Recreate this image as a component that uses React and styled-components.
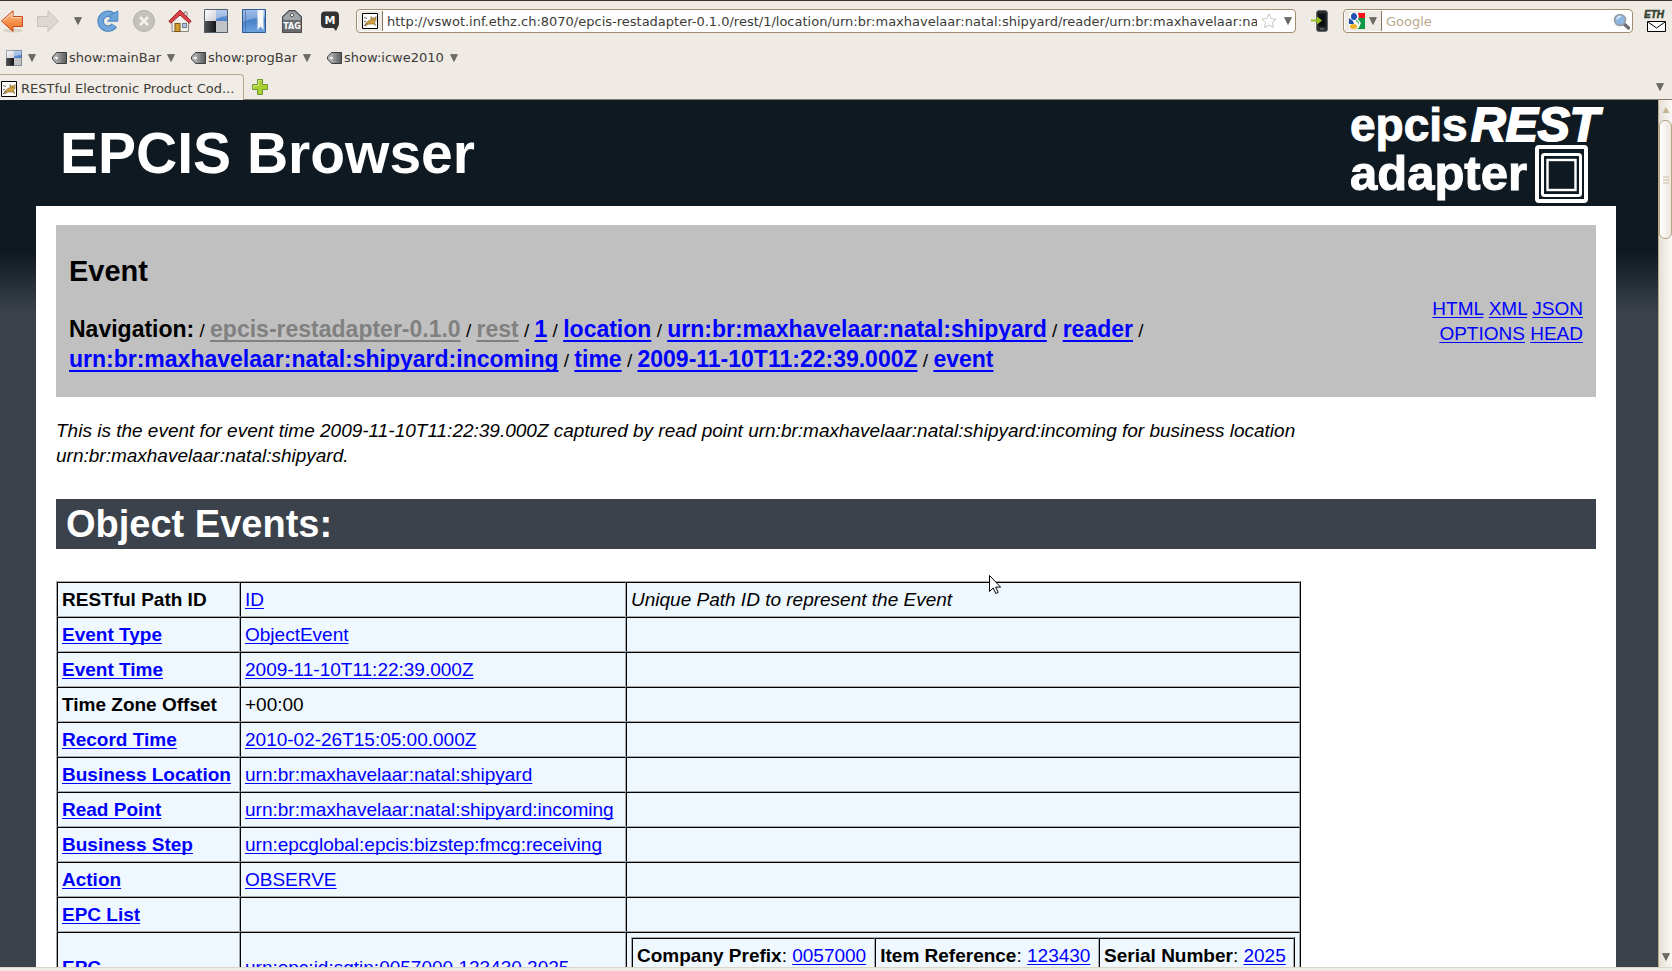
import React from "react";
import styled, { createGlobalStyle, css } from "styled-components";

const GlobalStyle = createGlobalStyle`
  *, *::before, *::after { box-sizing: border-box; }
  body { margin: 0; background: #efeae3; font-family: "Liberation Sans", Arial, sans-serif; }
`;

const Window = styled.div`
  display: flex;
  flex-direction: column;
  height: 100vh;
  overflow: hidden;
`;

/* ---------- browser chrome ---------- */

const Chrome = styled.header`
  flex: none;
  border-top: 1px solid #3c3633;
  background: #efeae3;
  color: #3c3b37;
  font: 13px/16px "DejaVu Sans", Verdana, sans-serif;
`;

const Toolbar = styled.div`
  display: flex;
  align-items: center;
  height: 40px;
  padding-right: 6px;
`;

const ToolGroup = styled.div`
  display: flex;
  align-items: center;
  gap: 12px;
  padding-right: 12px;
`;

const IconButton = styled.button`
  display: flex;
  align-items: center;
  justify-content: ${(p) => p.$align || "center"};
  flex: none;
  width: ${(p) => p.$w || 24}px;
  height: ${(p) => p.$h || 24}px;
  padding: 0;
  border: 0;
  background: none;
`;

const Field = styled.div`
  display: flex;
  align-items: center;
  flex: ${(p) => p.$flex || "none"};
  width: ${(p) => (p.$w ? p.$w + "px" : "auto")};
  height: 24px;
  border: 1px solid #a08d6f;
  border-radius: 4px;
  background: #fff;
  overflow: hidden;
`;

const FieldAddon = styled.div`
  display: flex;
  align-items: center;
  gap: 4px;
  height: 20px;
  padding: 0 4px;
  margin-left: 1px;
  border-right: 1px solid #85755c;
  background: #efeae3;
`;

const FieldInput = styled.input`
  flex: 1;
  min-width: 0;
  height: 22px;
  padding: 0;
  margin-left: 4px;
  border: 0;
  outline: 0;
  background: transparent;
  color: #3c3b37;
  font: inherit;
  &::placeholder { color: #b9a88b; opacity: 1; }
`;

const BookmarkBar = styled.nav`
  display: flex;
  align-items: center;
  gap: 16px;
  height: 33px;
  padding-left: 6px;
`;

const Bookmark = styled.button`
  display: flex;
  align-items: center;
  gap: 2px;
  padding: 0;
  border: 0;
  background: none;
  color: inherit;
  font: inherit;
  & > svg:last-child { margin-left: 4px; }
`;

const TabStrip = styled.div`
  display: flex;
  align-items: stretch;
  height: 26px;
`;

const Tab = styled.button`
  display: flex;
  align-items: center;
  gap: 4px;
  width: 244px;
  padding: 2px 0 0 1px;
  border: solid #b5a88f;
  border-width: 1px 1px 0 0;
  border-radius: 0 4px 0 0;
  background: #f1ede6;
  color: inherit;
  font: inherit;
`;

const TabRest = styled.div`
  display: flex;
  flex: 1;
  align-items: center;
  justify-content: space-between;
  padding: 0 7px 0 6px;
  border-bottom: 1px solid #85796a;
`;

/* ---------- page ---------- */

const Viewport = styled.div`
  position: relative;
  display: flex;
  flex: 1;
  min-height: 0;
`;

const Page = styled.div`
  flex: 1;
  min-width: 0;
  overflow: hidden;
  padding: 0 42px 0 36px;
  background: linear-gradient(#0f1922 0, #0f1922 152px, #3b424c 214px);
  font-size: 19px;
  line-height: 25px;
`;

const Banner = styled.div`
  display: flex;
  justify-content: space-between;
  align-items: center;
  height: 106px;
  padding: 0 9px 0 24px;
`;

const Title = styled.h1`
  margin: 0;
  color: #fff;
  font-size: 57px;
  line-height: 64px;
`;

const Sheet = styled.main`
  padding: 19px 20px 0;
  background: #fff;
  color: #000;
`;

const NavPanel = styled.section`
  display: flex;
  justify-content: space-between;
  min-height: 172px;
  padding: 0 13px;
  background: #c0c0c0;
`;

const PanelTitle = styled.h2`
  margin: 30px 0 28px;
  font-size: 29px;
  line-height: 32px;
`;

const Crumbs = styled.nav`
  font-size: 19px;
  line-height: 29px;
  & > b, & > a { font-size: 23px; }
`;

const Link = styled.a`
  color: #00f;
  text-decoration: underline 1px;
  text-underline-offset: 2px;
  text-decoration-skip-ink: none;
  ${(p) => p.$crumb && css`
    font-weight: bold;
    text-decoration-thickness: 2px;
    text-underline-offset: 3px;
  `}
  ${(p) => p.$muted && css`color: #808080;`}
`;

const Formats = styled.div`
  flex: none;
  width: 170px;
  padding-top: 71px;
  text-align: right;
`;

const Intro = styled.p`
  margin: 21px 0 31px;
  padding-right: 80px;
  font-style: italic;
`;

const SectionTitle = styled.h2`
  margin: 0 0 32px;
  padding-left: 10px;
  background: #3b424b;
  color: #fff;
  font-size: 38px;
  line-height: 50px;
`;

const Grid = styled.table`
  border: 1px solid;
  border-color: #a9a9a9 #000 #000 #a9a9a9;
  border-spacing: 0;
  background: #eff7ff;
  ${(p) => p.$nested && css`width: 100%; margin-bottom: 24px;`}
`;

const cell = css`
  padding: 4px;
  border: 1px solid;
  border-color: #000 #a9a9a9 #a9a9a9 #000;
  text-align: left;
  white-space: nowrap;
  height: 35px;
`;
const HeadCell = styled.th`${cell}`;
const Cell = styled.td`${cell} font-style: ${(p) => (p.$note ? "italic" : "normal")};`;
const Col = styled.col`width: ${(p) => p.$w}px;`;

const ScrollBar = styled.div`
  display: flex;
  flex-direction: column;
  flex: none;
  width: 14px;
  border-left: 1px solid #b9a888;
  background: linear-gradient(90deg, #e6e0d5, #faf8f5);
`;
const ScrollButton = styled.button`
  display: flex;
  align-items: center;
  justify-content: center;
  height: 20px;
  padding: 0;
  border: 0;
  background: none;
`;
const Thumb = styled.div`
  display: flex;
  align-items: center;
  justify-content: center;
  height: 119px;
  border: 1px solid #b5a585;
  border-radius: 6px;
  background: linear-gradient(90deg, #fff, #ece6dc);
`;
const Spacer = styled.div`flex: 1;`;

const StatusEdge = styled.footer`
  flex: none;
  height: 4px;
  border-top: 1px solid #dcd5ca;
  background: #efeae3;
`;

const Pointer = styled.svg`
  position: absolute;
  left: 988px;
  top: 474px;
`;

/* ---------- icons ---------- */

const Caret = ({ up, c = "#6b6a65" }) => (
  <svg width="8" height="8" viewBox="0 0 8 8">
    <path d={up ? "M4 1 7.500 7H.5z" : "M.5 .5h7L4 7.500z"} fill={c} stroke="#55534e" strokeWidth={up ? 0 : 0.6} />
  </svg>
);

const Back = () => (
  <svg width="24" height="24" viewBox="0 0 24 24">
    <defs><linearGradient id="bk" x2="0" y2="1"><stop stopColor="#fbc089" /><stop offset="1" stopColor="#ee6a1c" /></linearGradient></defs>
    <ellipse cx="13" cy="21.500" rx="10" ry="2" fill="#dcd3c8" />
    <path d="M1.500 12 13 1.800V7.500h9.500v10H13V22.500z" fill="url(#bk)" stroke="#c9461a" strokeLinejoin="round" />
    <path d="M3.200 12 12 4.200V8.600h9.400" fill="none" stroke="#fddcb9" />
  </svg>
);
const Forward = () => (
  <svg width="24" height="24" viewBox="0 0 24 24">
    <path d="M22.500 12 12 1.800V7.500H1.500v10H12V22.500z" fill="#dcd8d1" stroke="#c7c2ba" strokeLinejoin="round" />
  </svg>
);
const Reload = () => (
  <svg width="24" height="24" viewBox="0 0 24 24">
    <path d="M18.300 16.200A7.400 7.400 0 1 1 16.600 6.400" fill="none" stroke="#3f78b5" strokeWidth="6.400" />
    <path d="M18.300 16.200A7.400 7.400 0 1 1 16.600 6.400" fill="none" stroke="#6ea6dc" strokeWidth="4.800" />
    <path d="M21.800 2v10.200H11.600l3.600-3.600-2.200-2.300 4.500-2z" fill="#6ea6dc" stroke="#4a86c4" />
  </svg>
);
const Stop = () => (
  <svg width="24" height="24" viewBox="0 0 24 24">
    <circle cx="12" cy="12" r="10.500" fill="#c5c1bb" stroke="#b5b1ab" />
    <path d="M8 8l8 8M16 8l-8 8" stroke="#f4f1ed" strokeWidth="2.600" />
  </svg>
);
const Home = () => (
  <svg width="24" height="24" viewBox="0 0 24 24">
    <path d="M4 11.500v11h16.500v-11L12 4z" fill="#f1efec" stroke="#8b8782" />
    <path d="M16 3h3v5h-3z" fill="#e9e7e4" stroke="#8b8782" />
    <path d="M12 1 .8 12.200l2 1.900L12 6l9.200 8.100 2-1.900z" fill="#d8444a" stroke="#a5232a" />
    <rect x="7" y="14.500" width="5" height="8" fill="#d39a2c" stroke="#7d5610" />
    <rect x="14.500" y="14.500" width="4" height="4" fill="#a9c4e2" stroke="#6f7d8c" />
  </svg>
);
const Delicious = ({ size = 24 }) => (
  <svg width={size} height={size} viewBox="0 0 24 24">
    <defs>
      <linearGradient id="dl1" x2="1" y2="1"><stop stopColor="#fff" /><stop offset="1" stopColor="#d0d0d3" /></linearGradient>
      <linearGradient id="dl2" x2="0" y2="1"><stop stopColor="#8bb0e0" /><stop offset="1" stopColor="#4a7fcb" /></linearGradient>
      <linearGradient id="dl3" x2="1"><stop stopColor="#55575b" /><stop offset="1" stopColor="#131416" /></linearGradient>
    </defs>
    <path d="M0 0h12v12H0z" fill="url(#dl1)" /><path d="M12 0h12v12H12z" fill="url(#dl2)" />
    <path d="M0 12h12v12H0z" fill="url(#dl3)" /><path d="M12 12h12v12H12z" fill="#c1c3c7" />
    <path d="M12 0h12v7c-5 0-8 1-12 3z" fill="#fff" opacity=".4" />
    <path d="M.5 .5h23v23H.5z" fill="none" stroke="#55606f" />
  </svg>
);
const Book = () => (
  <svg width="24" height="24" viewBox="0 0 24 24">
    <defs><linearGradient id="bm" x2="0" y2="1"><stop stopColor="#7ba6df" /><stop offset=".5" stopColor="#4b82c9" /><stop offset="1" stopColor="#6fa3e0" /></linearGradient></defs>
    <path d="M.5 .5h23v23H.5z" fill="url(#bm)" stroke="#2f5a94" />
    <path d="M1 1h22v7C14 8 8 10 1 13z" fill="#fff" opacity=".25" />
    <path d="M3.500 1v22" stroke="#2f5a94" opacity=".5" />
    <path d="M15.500 1h6v20l-3-3.500-3 3.500z" fill="#f5f7fa" />
  </svg>
);
const TagIcon = () => (
  <svg width="22" height="24" viewBox="0 0 22 24">
    <path d="M1.500 7.500 8 1.500h6l6.500 6v16h-19z" fill="#676b6e" stroke="#484c4f" />
    <path d="M2.500 8 8.500 2.500h5l6 5.500v3h-17z" fill="#a1a4a6" />
    <circle cx="11" cy="6" r="1.700" fill="#f5f5f5" stroke="#55585a" />
    <text x="11" y="20" textAnchor="middle" fontFamily="DejaVu Sans" fontWeight="bold" fontSize="8" fill="#fff">TAG</text>
  </svg>
);
const MIcon = () => (
  <svg width="20" height="22" viewBox="0 0 20 22">
    <path d="M5 1.500h10a4 4 0 0 1 4 4v9l-3 6.500-2.500-3H5a4 4 0 0 1-4-4v-8.500a4 4 0 0 1 4-4z" fill="#333334" />
    <text x="10" y="14" textAnchor="middle" fontFamily="DejaVu Sans" fontWeight="bold" fontSize="11" fill="#fff">M</text>
  </svg>
);
const Cat = () => (
  <svg width="16" height="16" viewBox="0 0 16 16">
    <path d="M.5 .5h15v15H.5z" fill="#fff" stroke="#000" />
    <path d="M9 3.500l1.500 1.500h2L14 3.500v4L12.500 9l1 3.500-2-1.500H7l-4 2 1-3 3-2.500 2-1z" fill="#d2a041" stroke="#6e5a35" strokeWidth=".6" />
    <path d="M2 4.500l3 1M2 9l2-1M2 13l3-3M11 6.500h.8" stroke="#59564e" strokeWidth=".9" />
  </svg>
);
const Star = () => (
  <svg width="16" height="16" viewBox="0 0 16 16">
    <path d="M8 1l2.100 4.700 5 .5-3.800 3.400 1.100 5L8 12l-4.400 2.600 1.100-5L.9 6.200l5-.5z" fill="#fff" stroke="#c8c4be" />
  </svg>
);
const Phone = () => (
  <svg width="20" height="24" viewBox="0 0 20 24">
    <rect x="6.500" y="1.500" width="11" height="21" rx="2.500" fill="#2b2c2e" stroke="#66686b" />
    <path d="M8.500 4.500h7v13h-7z" fill="#0d0e0f" /><path d="M10 20h4" stroke="#85888c" />
    <path d="M1 10.500h6V7.500l5 4-5 4v-3H1z" fill="#98c321" />
  </svg>
);
const GoogleIcon = () => (
  <svg width="16" height="16" viewBox="0 0 16 16">
    <path d="M0 0h16v16H0z" fill="#fff" /><path d="M9 0h7v5H8z" fill="#f5141c" />
    <path d="M8 5h8v11H8c3-3 2-6-1-8z" fill="#129748" />
    <path d="M0 5v6h5L4 8z" fill="#1f4fb4" />
    <ellipse cx="5" cy="3.500" rx="3" ry="3.500" fill="#1f4fb4" /><ellipse cx="4.500" cy="13.500" rx="3.700" ry="2.500" fill="#f2b32a" />
    <path d="M7 0c3 2 2 5 1 6l3 4-2 5" fill="none" stroke="#fff" strokeWidth="1.500" />
  </svg>
);
const Magnifier = () => (
  <svg width="17" height="17" viewBox="0 0 17 17">
    <path d="M10 10l5.500 5" stroke="#6d6f72" strokeWidth="3.400" strokeLinecap="round" />
    <circle cx="7" cy="7" r="5.500" fill="#8fb7e4" stroke="#9a9da1" strokeWidth="1.600" />
    <path d="M4 6.500a3.500 3.500 0 0 1 4-3" stroke="#e6f0fb" fill="none" strokeWidth="1.500" />
  </svg>
);
const EthMail = () => (
  <svg width="22" height="24" viewBox="0 0 22 24">
    <text x="0" y="9" fontFamily="Liberation Sans" fontStyle="italic" fontWeight="bold" fontSize="10" fill="#35452f" stroke="#35452f" strokeWidth=".5">ETH</text>
    <path d="M3.500 12.500h18v10h-18z" fill="#fff" stroke="#000" />
    <path d="M4 13l8.500 6 8.500-6" fill="none" stroke="#000" />
  </svg>
);
const SmallTag = () => (
  <svg width="15" height="12" viewBox="0 0 15 12">
    <defs><linearGradient id="st" x2="1"><stop stopColor="#c9c9c9" /><stop offset="1" stopColor="#56585a" /></linearGradient></defs>
    <path d="M4.500 .5h10v11h-10L.5 7V5z" fill="url(#st)" stroke="#3d3e40" />
    <circle cx="4.500" cy="6" r="1.300" fill="#fff" />
  </svg>
);
const Plus = () => (
  <svg width="18" height="18" viewBox="0 0 18 18">
    <path d="M6.500 1.500h5v5h5v5h-5v5h-5v-5h-5v-5h5z" fill="#a9cf36" stroke="#6c972a" />
    <path d="M7.500 7.500v-5h3M2.500 10.500v-3h5" fill="none" stroke="#cde37f" />
  </svg>
);
const Logo = () => (
  <svg width="258" height="106" viewBox="0 0 258 106" role="img" aria-label="epcisREST adapter" fill="#fff" fontFamily="Liberation Sans" fontWeight="bold">
    <text x="1" y="41" fontSize="46" stroke="#fff">epcis</text>
    <text x="122" y="41" fontSize="48" fontStyle="italic" stroke="#fff" strokeWidth="2">REST</text>
    <text x="1" y="90" fontSize="49" stroke="#fff">adapter</text>
    <rect x="188" y="47" width="49" height="54" rx="2" fill="none" stroke="#fff" strokeWidth="4" />
    <rect x="193.500" y="54.500" width="38" height="41" rx="2" fill="none" stroke="#fff" strokeWidth="3" />
    <rect x="198.500" y="60" width="28" height="30" fill="none" stroke="#fff" strokeWidth="2.400" />
  </svg>
);

/* ---------- data ---------- */

const address =
  "http://vswot.inf.ethz.ch:8070/epcis-restadapter-0.1.0/rest/1/location/urn:br:maxhavelaar:natal:shipyard/reader/urn:br:maxhavelaar:natal:shipyard:incoming/time/2009-11-10T11:22:39.000Z/event";

const crumbs = [
  { text: "epcis-restadapter-0.1.0", muted: true },
  { text: "rest", muted: true },
  { text: "1" },
  { text: "location" },
  { text: "urn:br:maxhavelaar:natal:shipyard" },
  { text: "reader" },
  { text: "urn:br:maxhavelaar:natal:shipyard:incoming" },
  { text: "time" },
  { text: "2009-11-10T11:22:39.000Z" },
  { text: "event" },
];

const rows = [
  { name: "RESTful Path ID", plain: true, value: "ID", note: "Unique Path ID to represent the Event" },
  { name: "Event Type", value: "ObjectEvent" },
  { name: "Event Time", value: "2009-11-10T11:22:39.000Z" },
  { name: "Time Zone Offset", plain: true, value: "+00:00", plainValue: true },
  { name: "Record Time", value: "2010-02-26T15:05:00.000Z" },
  { name: "Business Location", value: "urn:br:maxhavelaar:natal:shipyard" },
  { name: "Read Point", value: "urn:br:maxhavelaar:natal:shipyard:incoming" },
  { name: "Business Step", value: "urn:epcglobal:epcis:bizstep:fmcg:receiving" },
  { name: "Action", value: "OBSERVE" },
  { name: "EPC List" },
];

const epcParts = [
  ["Company Prefix", "0057000"],
  ["Item Reference", "123430"],
  ["Serial Number", "2025"],
];

export default function App() {
  return (
    <Window>
      <GlobalStyle />
      <Chrome>
        <Toolbar>
          <ToolGroup>
            <IconButton aria-label="Back"><Back /></IconButton>
            <IconButton aria-label="Forward"><Forward /></IconButton>
            <IconButton $w={12} aria-label="History"><Caret /></IconButton>
            <IconButton aria-label="Reload"><Reload /></IconButton>
            <IconButton aria-label="Stop"><Stop /></IconButton>
            <IconButton aria-label="Home"><Home /></IconButton>
            <IconButton aria-label="Delicious"><Delicious /></IconButton>
            <IconButton $w={28} aria-label="Bookmarks"><Book /></IconButton>
            <IconButton aria-label="Tag"><TagIcon /></IconButton>
            <IconButton $w={28} aria-label="Mendeley"><MIcon /></IconButton>
          </ToolGroup>
          <Field $flex="1">
            <FieldAddon><Cat /></FieldAddon>
            <FieldInput aria-label="Address" defaultValue={address} />
            <IconButton $w={24} $h={20} aria-label="Bookmark this page"><Star /></IconButton>
            <IconButton $w={14} $h={20} aria-label="Show history"><Caret /></IconButton>
          </Field>
          <IconButton $w={47} aria-label="Send to phone"><Phone /></IconButton>
          <Field $w={290}>
            <FieldAddon><GoogleIcon /><Caret /></FieldAddon>
            <FieldInput aria-label="Search" placeholder="Google" />
            <IconButton $w={22} $h={20} aria-label="Search"><Magnifier /></IconButton>
          </Field>
          <IconButton $w={33} $align="flex-end" aria-label="ETH mail"><EthMail /></IconButton>
        </Toolbar>
        <BookmarkBar>
          <Bookmark aria-label="Delicious menu"><Delicious size={16} /><Caret /></Bookmark>
          {["show:mainBar", "show:progBar", "show:icwe2010"].map((b) => (
            <Bookmark key={b}><SmallTag />{b}<Caret /></Bookmark>
          ))}
        </BookmarkBar>
        <TabStrip>
          <Tab><Cat />RESTful Electronic Product Cod...</Tab>
          <TabRest>
            <IconButton $w={20} aria-label="New tab"><Plus /></IconButton>
            <IconButton $w={10} aria-label="List all tabs"><Caret /></IconButton>
          </TabRest>
        </TabStrip>
      </Chrome>

      <Viewport>
        <Page>
          <Banner>
            <Title>EPCIS Browser</Title>
            <Logo />
          </Banner>
          <Sheet>
            <NavPanel>
              <div>
                <PanelTitle>Event</PanelTitle>
                <Crumbs>
                  <b>Navigation:</b>
                  {crumbs.map((c) => (
                    <React.Fragment key={c.text}>
                      {" / "}
                      <Link href="#" $crumb $muted={c.muted}>{c.text}</Link>
                    </React.Fragment>
                  ))}
                </Crumbs>
              </div>
              <Formats>
                {["HTML", "XML", "JSON", "OPTIONS", "HEAD"].map((f) => (
                  <React.Fragment key={f}><Link href="#">{f}</Link>{" "}</React.Fragment>
                ))}
              </Formats>
            </NavPanel>
            <Intro>
              This is the event for event time 2009-11-10T11:22:39.000Z captured by read point
              urn:br:maxhavelaar:natal:shipyard:incoming for business location urn:br:maxhavelaar:natal:shipyard.
            </Intro>
            <SectionTitle>Object Events:</SectionTitle>
            <Grid>
              <colgroup><Col $w={183} /><Col $w={386} /><Col $w={674} /></colgroup>
              <tbody>
                {rows.map((r) => (
                  <tr key={r.name}>
                    <HeadCell scope="row">{r.plain ? r.name : <Link href="#">{r.name}</Link>}</HeadCell>
                    <Cell>{r.value && (r.plainValue ? r.value : <Link href="#">{r.value}</Link>)}</Cell>
                    <Cell $note>{r.note}</Cell>
                  </tr>
                ))}
                <tr>
                  <HeadCell scope="row"><Link href="#">EPC</Link></HeadCell>
                  <Cell><Link href="#">urn:epc:id:sgtin:0057000.123430.2025</Link></Cell>
                  <Cell>
                    <Grid $nested>
                      <tbody>
                        <tr>
                          {epcParts.map(([k, v]) => (
                            <Cell key={k}><b>{k}</b>: <Link href="#">{v}</Link></Cell>
                          ))}
                        </tr>
                      </tbody>
                    </Grid>
                  </Cell>
                </tr>
              </tbody>
            </Grid>
          </Sheet>
        </Page>
        <ScrollBar>
          <ScrollButton aria-label="Scroll up"><Caret up c="#c3b594" /></ScrollButton>
          <Thumb>
            <svg width="6" height="8" viewBox="0 0 6 8"><path d="M0 1h6M0 4h6M0 7h6" stroke="#c9bda4" /></svg>
          </Thumb>
          <Spacer />
          <ScrollButton aria-label="Scroll down"><Caret /></ScrollButton>
        </ScrollBar>
        <Pointer width="14" height="22" viewBox="0 0 14 22">
          <path d="M1.500 1.500v16l3.700-3.500 2.600 5.500 2.400-1.100-2.600-5.300h5z" fill="#fff" stroke="#000" />
        </Pointer>
      </Viewport>
      <StatusEdge />
    </Window>
  );
}
